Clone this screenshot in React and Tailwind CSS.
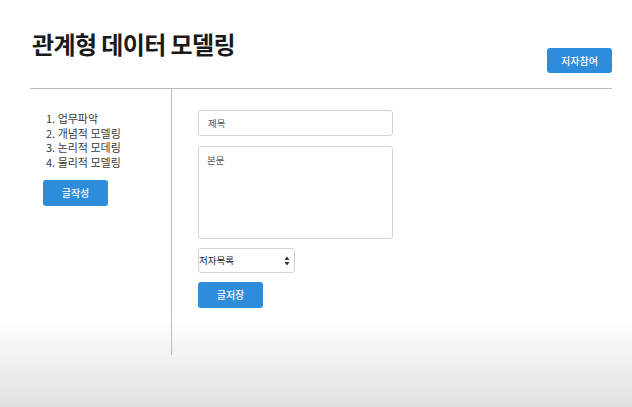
import React from 'react';

const topics = ['1. 업무파악', '2. 개념적 모델링', '3. 논리적 모데링', '4. 물리적 모델링'];

export default function App() {
    return (
        <div className="w-[632px] h-[407px] overflow-hidden bg-[linear-gradient(to_bottom,#ffffff_78%,#e0e0e0)] font-['Noto_Sans_CJK_KR','Noto_Sans',sans-serif] text-[#333]">
            {/* Header */}
            <div className="ml-[30px] mr-[20px] h-[89px] flex justify-between border-b border-[#bcbcbc]">
                <h1 className="mt-[30px] pl-[2px] text-[24px] leading-[28px] font-bold text-[#1a1a1a] tracking-[-0.6px]">
                    관계형 데이터 모델링
                </h1>
                <button className="self-end mb-[15px] w-[65px] h-[25px] rounded-[3px] bg-[#2e8ddb] text-white text-[10px] font-medium leading-none">
                    저자참여
                </button>
            </div>

            {/* Body */}
            <div className="mx-[30px] flex">
                {/* Sidebar */}
                <div className="w-[142px] h-[266px] border-r-[1.5px] border-[#bcbcbc] pt-[22px]">
                    <ul className="pl-[16px] text-[11px] leading-[14.5px] text-[#3a3a3a]">
                        {topics.map((t) => (
                            <li key={t}>{t}</li>
                        ))}
                    </ul>
                    <button className="mt-[11px] ml-[13px] w-[65px] h-[26px] rounded-[3px] bg-[#2e8ddb] text-white text-[10px] font-medium leading-none">
                        글작성
                    </button>
                </div>

                {/* Form */}
                <div className="pl-[26px] pt-[21px] flex flex-col items-start">
                    <div className="w-[195px] h-[26px] border border-[#d4d4d4] rounded-[3px] flex items-center pl-[9px] text-[9.5px] text-[#555]">
                        제목
                    </div>
                    <div className="mt-[10px] w-[195px] h-[93px] border border-[#d4d4d4] rounded-[3px] pl-[8px] pt-[6px] text-[9.5px] text-[#555]">
                        본문
                    </div>
                    <div className="mt-[9px] w-[97px] h-[25px] border border-[#d4d4d4] rounded-[3px] flex items-center justify-between pr-[4px] text-[9.5px] text-[#222]">
                        <span>저자목록</span>
                        <svg width="6" height="10" viewBox="0 0 6 10">
                            <path d="M3 0.5 L5.5 4 L0.5 4 Z" fill="#333" />
                            <path d="M3 9.5 L5.5 6 L0.5 6 Z" fill="#333" />
                        </svg>
                    </div>
                    <button className="mt-[9px] w-[65px] h-[26px] rounded-[3px] bg-[#2e8ddb] text-white text-[10px] font-medium leading-none">
                        글저장
                    </button>
                </div>
            </div>
        </div>
    );
}
